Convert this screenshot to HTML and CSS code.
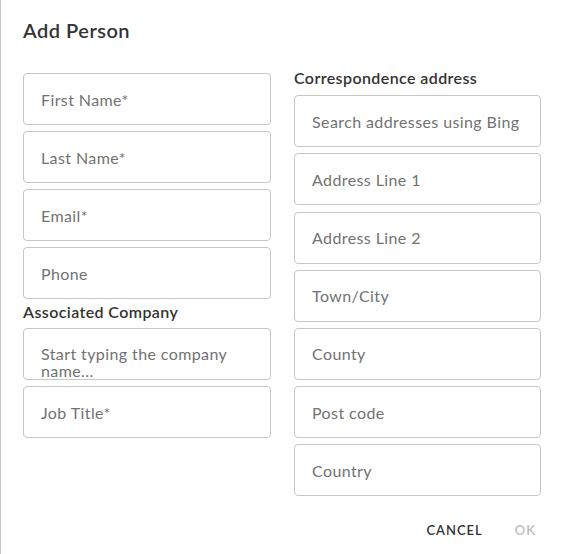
FILE: index.html
```html
<!DOCTYPE html>
<html>
<head>
<meta charset="utf-8">
<link rel="stylesheet" href="styles.css">
</head>
<body>
<div class="dialog">
  <h1 class="title">Add Person</h1>
  <div class="columns">
    <div class="col col-left">
      <div class="field"><span class="ph">First Name*</span></div>
      <div class="field"><span class="ph">Last Name*</span></div>
      <div class="field"><span class="ph">Email*</span></div>
      <div class="field"><span class="ph">Phone</span></div>
      <div class="label label-company">Associated Company</div>
      <div class="field field-company"><span class="ph ph-wrap">Start typing the company name...</span></div>
      <div class="field"><span class="ph">Job Title*</span></div>
    </div>
    <div class="col col-right">
      <div class="label label-address">Correspondence address</div>
      <div class="field field-clip"><span class="ph">Search addresses using Bing</span></div>
      <div class="field"><span class="ph">Address Line 1</span></div>
      <div class="field"><span class="ph">Address Line 2</span></div>
      <div class="field"><span class="ph">Town/City</span></div>
      <div class="field"><span class="ph">County</span></div>
      <div class="field"><span class="ph">Post code</span></div>
      <div class="field"><span class="ph">Country</span></div>
    </div>
  </div>
  <div class="actions">
    <button class="btn btn-cancel">CANCEL</button>
    <button class="btn btn-ok">OK</button>
  </div>
</div>
</body>
</html>
```

FILE: styles.css
```css
html, body {
  margin: 0;
  padding: 0;
  background: #ffffff;
}
body {
  font-family: "Lato", "Liberation Sans", sans-serif;
  color: #333333;
}
.dialog {
  width: 563px;
  height: 554px;
  box-sizing: border-box;
  border-left: 1px solid #c8c8c8;
  padding: 0 22px 0 22px;
  display: flex;
  flex-direction: column;
}
.title {
  margin: 18px 0 0 0;
  font-size: 20px;
  line-height: 24px;
  font-weight: 600;
  color: #333333;
  letter-spacing: 0.5px;
}
.columns {
  display: flex;
  gap: 23px;
  margin-top: 17px;
}
.col {
  display: flex;
  flex-direction: column;
  gap: 6px;
}
.col-left {
  width: 248px;
  padding-top: 14px;
}
.col-right {
  width: 247px;
  padding-top: 10px;
  gap: 6.2px;
}
.field {
  height: 52px;
  box-sizing: border-box;
  border: 1px solid #c6c6c6;
  border-radius: 4px;
  padding: 0 10px 0 17px;
  display: flex;
  align-items: center;
  overflow: hidden;
  white-space: nowrap;
}
.ph {
  font-size: 16px;
  color: #727272;
  letter-spacing: 0.4px;
}
.label {
  font-size: 16px;
  font-weight: 600;
  color: #333333;
  letter-spacing: 0.4px;
}
.label-address {
  line-height: 18px;
  margin-bottom: 2px;
}
.label-company {
  line-height: 18px;
  margin: -2px 0 1px 0;
}
.field-company {
  white-space: normal;
  overflow: visible;
  align-items: flex-start;
  padding-top: 16px;
}
.ph-wrap {
  line-height: 17px;
  background: #ffffff;
  position: relative;
  margin-left: -5px;
  padding-left: 5px;
}
.actions {
  display: flex;
  justify-content: flex-end;
  gap: 32px;
  margin-top: 22px;
  padding-right: 5px;
}
.btn {
  border: none;
  background: none;
  font-family: inherit;
  font-size: 13px;
  font-weight: 600;
  letter-spacing: 1px;
  padding: 4px 0;
  cursor: pointer;
}
.btn-cancel {
  color: #333333;
}
.btn-ok {
  color: #bdbdbd;
}
```
